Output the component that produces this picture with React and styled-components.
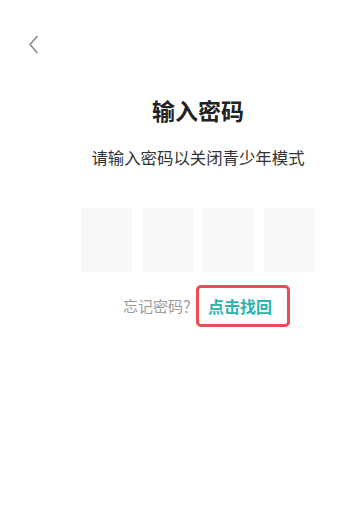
import React from "react";
import styled, { createGlobalStyle } from "styled-components";

const GlobalStyle = createGlobalStyle`
  html, body {
    margin: 0;
    padding: 0;
    background: #ffffff;
    font-family: "Noto Sans CJK SC", "Noto Sans", sans-serif;
  }
`;

const Page = styled.div`
  width: 362px;
  height: 516px;
  background: #ffffff;
  display: flex;
  flex-direction: column;
`;

const Header = styled.div`
  display: flex;
  align-items: center;
  height: 54px;
  padding: 35px 0 0 28px;
  box-sizing: border-box;
`;

const BackButton = styled.button`
  border: none;
  background: none;
  padding: 0;
  display: flex;
  color: #8a8a8a;
  cursor: pointer;
`;

const Content = styled.div`
  display: flex;
  flex-direction: column;
  align-items: center;
  padding-left: 34px;
`;

const Title = styled.h1`
  margin: 41px 0 0;
  font-size: 23px;
  line-height: 30px;
  font-weight: 600;
  color: #222222;
`;

const Subtitle = styled.p`
  margin: 21px 0 0;
  font-size: 16.4px;
  line-height: 22px;
  color: #333333;
`;

const CodeRow = styled.div`
  display: flex;
  gap: 10px;
  margin-top: 40px;
`;

const CodeCell = styled.div`
  width: 51px;
  height: 64px;
  background: #f8f8f8;
`;

const Footer = styled.div`
  display: flex;
  align-items: center;
  margin-top: 13px;
  padding-left: 123px;
  font-size: 15px;
`;

const Hint = styled.span`
  color: #9a9a9a;
  line-height: 20px;
`;

const Link = styled.a`
  display: flex;
  align-items: center;
  height: 42px;
  box-sizing: border-box;
  margin-left: -2px;
  padding: 0 15px 0 9px;
  border: 3px solid #ee4b56;
  border-radius: 5px;
  color: #2bb3ae;
  font-size: 16px;
  font-weight: 600;
  text-decoration: none;
`;

export default function App() {
  const cells = [0, 1, 2, 3];
  return (
    <Page>
      <GlobalStyle />
      <Header>
        <BackButton aria-label="返回">
          <svg width="11" height="19" viewBox="0 0 11 19" fill="none">
            <polyline
              points="9,1.5 2,9.5 9,17.5"
              stroke="currentColor"
              strokeWidth="1.6"
              strokeLinecap="round"
              strokeLinejoin="round"
            />
          </svg>
        </BackButton>
      </Header>
      <Content>
        <Title>输入密码</Title>
        <Subtitle>请输入密码以关闭青少年模式</Subtitle>
        <CodeRow>
          {cells.map((i) => (
            <CodeCell key={i} />
          ))}
        </CodeRow>
      </Content>
      <Footer>
        <Hint>忘记密码？</Hint>
        <Link href="#">点击找回</Link>
      </Footer>
    </Page>
  );
}
